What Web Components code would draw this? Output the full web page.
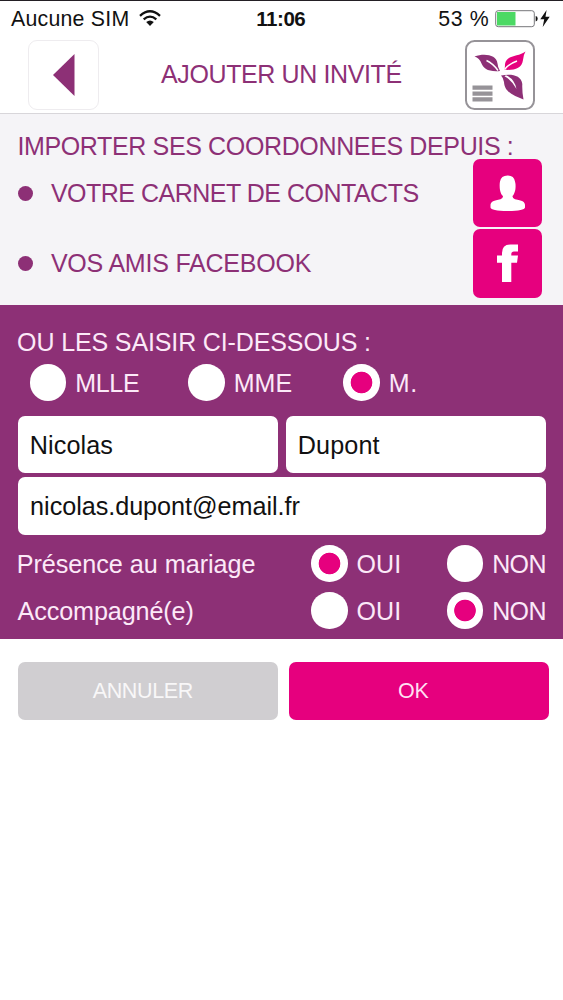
<!DOCTYPE html>
<html lang="fr"><head><meta charset="utf-8"><title>Ajouter un invité</title>
<style>
html,body{margin:0;background:#fff;font-family:"Liberation Sans",Arial,sans-serif}
</style></head><body>
<guest-page></guest-page>
<script>
const define=(name,html,init)=>{
  const t=document.createElement('template');t.innerHTML=html;
  customElements.define(name,class extends HTMLElement{
    connectedCallback(){
      if(this.shadowRoot)return;
      this.attachShadow({mode:'open'}).append(t.content.cloneNode(true));
      if(init)init(this,this.shadowRoot);
    }
  });
};
const ctx=document.createElement('canvas').getContext('2d');

// A single line of text whose visible glyphs span exactly `w` pixels.
define('fit-text',`<style>:host{display:block;flex:none;white-space:nowrap;line-height:30px}span{display:block}</style><span><slot></slot></span>`,(h,r)=>{
  const s=+h.getAttribute('size')||25,w=+h.getAttribute('w'),b=h.hasAttribute('bold')?'bold ':'',txt=h.textContent;
  // Measured at ten times the size, so that the glyph bounds are not rounded to whole pixels.
  ctx.font=b+s*10+'px "Liberation Sans"';
  const m=ctx.measureText(txt),left=m.actualBoundingBoxLeft/10,ink=left+m.actualBoundingBoxRight/10;
  // A first letter with a straight stem looks further left than a round or slanted one.
  const stem=/^[IMNPDn]/.test(txt)?1.2:0;
  h.style.cssText+=`;font:${b}${s}px/30px "Liberation Sans",Arial,sans-serif;width:${w}px`;
  const sp=r.querySelector('span');
  sp.style.letterSpacing=(w-ink-stem*1.4)/(txt.length-1)+'px';
  sp.style.marginLeft=left+stem+'px';
});

define('status-bar',`<style>
:host{display:flex;box-sizing:border-box;height:36px;border-top:1px solid #231f24;padding:3px 8px 0 11px;color:#111;align-items:flex-start}
svg{display:block;flex:none}.wifi{margin:6px 0 0 11px}.time{margin-left:97px}.pct{margin-left:134px}.bat{margin:6px 0 0 7px}
.bolt{margin:6px 0 0 2px}
</style>
<fit-text size="21.3" w="116.5">Aucune SIM</fit-text>
<svg class="wifi" width="22" height="17" viewBox="0 0 22 17" fill="none" stroke="#111" stroke-width="2.3"><path d="M1 5.8Q11-3.3 21 5.8M4.7 9.4Q11 3.8 17.3 9.4"/><path d="M7.2 12Q11 8.8 14.8 12L11 16z" fill="#111" stroke="none"/></svg>
<fit-text class="time" size="20.5" w="47.5" bold>11:06</fit-text>
<fit-text class="pct" size="21.3" w="49">53 %</fit-text>
<svg class="bat" width="43" height="18" viewBox="0 0 43 18"><rect x=".7" y=".7" width="38.6" height="16" rx="2.5" fill="#fff" stroke="#77777b" stroke-width="1"/><path d="M2 2h18.5v13.500H2z" fill="#4cd964"/><path d="M40.700 6q2 .3 2 2.700t-2 2.700z" fill="#111"/></svg>
<svg class="bolt" width="10" height="17" viewBox="0 0 10 17"><path d="M6.600 0L.3 9.300h3.900L2.700 17 9.700 6.700H5.500z" fill="#111"/></svg>`);

define('back-button',`<style>:host{display:flex;box-sizing:border-box;width:71px;height:70px;border:1.5px solid #eeecef;border-radius:9px;align-items:center;justify-content:center;background:#fff}svg{display:block;margin-top:-1px}</style>
<svg width="22" height="42" viewBox="0 0 22 42"><path d="M21.500 0v42L0 21z" fill="#8d3076"/></svg>`);

define('menu-button',`<style>:host{display:block;width:70px;height:70px}svg{display:block}</style>
<svg width="70" height="70" viewBox="0 0 70 70"><rect x="1" y="1" width="68" height="68" rx="8.500" fill="#fff" stroke="#969398" stroke-width="2"/>
<path d="M7.500 45.500h20v4.300h-20zM7.500 51.500h20v4.300h-20zM7.500 57.300h20v4.300h-20z" fill="#969398"/>
<path d="M9.500 16.500C20 13 31.500 15 32.500 23.500Q32.800 27.500 35 31C23 32 18.500 28.500 16.500 23.500Q14.500 18 9.500 16.500z" fill="#8d3076"/><path d="M21.500 20.500Q28 23.500 33 30.500" fill="none" stroke="#fff" stroke-width="1.400"/>
<path d="M60.500 11.500C54 17 41.500 14.500 40 24Q40 27.500 39.500 29.800C49 30.500 57 28.500 58 20Q58.300 15 60.500 11.500z" fill="#e6007e"/><path d="M39.500 29.500Q43.500 24 52 21" fill="none" stroke="#fff" stroke-width="1.400"/>
<path d="M36 35.500C46 33.500 56.500 35 57.300 44Q57 52 58.500 59.500C50 55.500 39.500 53 39 42Q38.500 38 36 35.500z" fill="#8d3076"/><path d="M41 35.300Q49.500 39 51.500 49Q46.500 40 39.500 36.300z" fill="#fff"/></svg>`);

define('nav-bar',`<style>:host{display:flex;box-sizing:border-box;height:78px;padding:4px 28px 0;border-bottom:1.5px solid #d8d6da;align-items:flex-start;color:#8d3076}fit-text{margin:19px 0 0 62px}menu-button{margin-left:auto}</style>
<back-button></back-button><fit-text w="240">AJOUTER UN INVITÉ</fit-text><menu-button></menu-button>`);

define('import-row',`<style>:host{display:flex;height:70.5px;align-items:center}i{width:15px;height:15px;border-radius:50%;background:#8d3076;margin:1px 18px 0 0}.icon{margin-left:auto;width:69px;height:68.5px;border-radius:7px;background:#e6007e;display:flex}</style>
<i></i><slot></slot><div class="icon"><slot name="icon"></slot></div>`);

define('import-section',`<style>:host{display:block;box-sizing:border-box;height:191px;padding:17px 21px 0 18px;background:#f5f4f7;color:#8d3076}
.t{margin:0 0 -3.5px .5px}svg{display:block}</style>
<fit-text class="t" w="493.5">IMPORTER SES COORDONNEES DEPUIS :</fit-text>
<import-row><fit-text w="367.5">VOTRE CARNET DE CONTACTS</fit-text><svg slot="icon" width="69" height="69" viewBox="0 0 69 69"><path d="M27 22.500Q28 16.500 34.500 16.500T42 22.500Q43 26 42.300 31Q41 36 39.500 37Q39.300 39.500 42 40.200C49 41.200 52 42.800 52 46V48.500Q51.500 51.800 34.500 52Q18 51.800 17.500 48.500V46C17.500 42.800 21 41.200 27.500 40.200Q30.200 39.500 30 37Q28 36 27 31Q26.300 26 27 22.500z" fill="#fff"/></svg></import-row>
<import-row><fit-text w="261.5">VOS AMIS FACEBOOK</fit-text><svg slot="icon" width="69" height="69" viewBox="0 0 69 69"><path d="M29 53V33.700H24V26.500H29V24Q29 15.500 37.500 15.500H45V22.500H41Q38.300 22.500 38.300 25V26.500H45L44 33.700H38.300V53z" fill="#fff"/></svg></import-row>`);

define('radio-option',`<style>:host{display:flex;align-items:center;height:36.5px}i{box-sizing:border-box;width:36.5px;height:36.5px;border-radius:50%;background:#fff;flex:none;margin-right:10px}:host([checked]) i{background:radial-gradient(circle,#e6007e 10.4px,#fff 11.2px)}::slotted(*){margin-top:2px}</style><i></i><slot></slot>`);

define('text-field',`<style>:host{display:flex;align-items:center;height:57.5px;box-sizing:border-box;background:#fff;border-radius:7px;padding:1px 0 0 13px;color:#111}</style><slot></slot>`);

define('guest-form',`<style>:host{display:block;box-sizing:border-box;height:334px;background:#8d3076;color:#fce9f8;padding:22px 17.5px 0}
.civ{display:grid;grid-template-columns:158.5px 155px auto;margin:7px 0 15px 12px}
.names{display:grid;grid-template-columns:1fr 1fr;gap:4px 8px}.wide{grid-column:1/3}
.q{display:grid;grid-template-columns:293.5px 135.5px 100px;align-items:center;margin-top:10.5px}.q>fit-text{margin-top:1px}.h{margin-left:.7px}</style>
<fit-text class="h" w="350.5">OU LES SAISIR CI-DESSOUS :</fit-text>
<div class="civ"><radio-option><fit-text w="63">MLLE</fit-text></radio-option><radio-option><fit-text w="57">MME</fit-text></radio-option><radio-option checked><fit-text w="26">M.</fit-text></radio-option></div>
<div class="names"><text-field><fit-text w="82" size="25.2">Nicolas</fit-text></text-field><text-field><fit-text w="81.5" size="25.2">Dupont</fit-text></text-field><text-field class="wide"><fit-text w="269.5" size="25.2">nicolas.dupont@email.fr</fit-text></text-field></div>
<div class="q"><fit-text w="237.5" size="25.2">Présence au mariage</fit-text><radio-option checked><fit-text w="41.5">OUI</fit-text></radio-option><radio-option><fit-text w="52">NON</fit-text></radio-option></div>
<div class="q"><fit-text w="175" size="25.2">Accompagné(e)</fit-text><radio-option><fit-text w="41.5">OUI</fit-text></radio-option><radio-option checked><fit-text w="52">NON</fit-text></radio-option></div>`);

define('action-button',`<style>:host{display:flex;height:58px;border-radius:7px;align-items:center;justify-content:center;background:#d0ced1;color:#f8f7f8}:host([primary]){background:#e6007e;color:#ffdff1}</style><slot></slot>`);

define('form-actions',`<style>:host{display:grid;grid-template-columns:260px 260.5px;gap:11px;padding:22.5px 0 0 17.5px}fit-text{margin-right:10px}</style>
<action-button><fit-text size="21.5" w="99.5">ANNULER</fit-text></action-button><action-button primary><fit-text size="21.5" w="29.5">OK</fit-text></action-button>`);

define('guest-page',`<style>:host{display:block;width:563px;height:1000px;overflow:hidden;background:#fff}</style>
<status-bar></status-bar><nav-bar></nav-bar><import-section></import-section><guest-form></guest-form><form-actions></form-actions>`);
</script></body></html>
